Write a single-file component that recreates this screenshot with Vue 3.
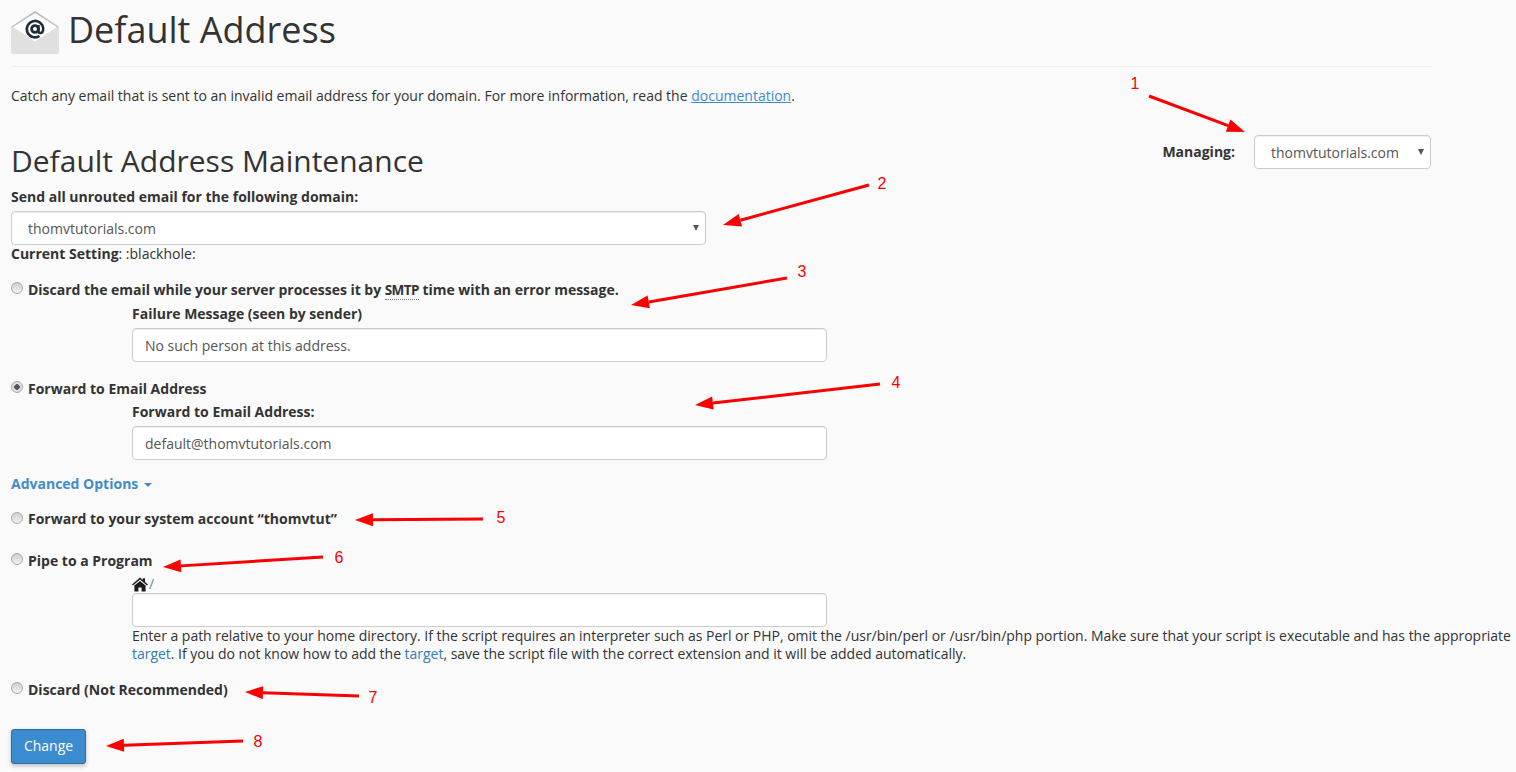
<script setup>
const arrows = [
  { x1: 1149, y1: 96, x2: 1245, y2: 132, n: '1', nx: 1135, ny: 89 },
  { x1: 869, y1: 185, x2: 723, y2: 225, n: '2', nx: 882, ny: 189 },
  { x1: 787, y1: 278, x2: 631, y2: 305, n: '3', nx: 802, ny: 277 },
  { x1: 880, y1: 384, x2: 695, y2: 405, n: '4', nx: 896, ny: 388 },
  { x1: 483, y1: 519, x2: 355, y2: 520, n: '5', nx: 501, ny: 523 },
  { x1: 323, y1: 557, x2: 163, y2: 567, n: '6', nx: 339, ny: 563 },
  { x1: 359, y1: 696, x2: 245, y2: 692, n: '7', nx: 373, ny: 703 },
  { x1: 243, y1: 741, x2: 106, y2: 746, n: '8', nx: 258, ny: 747 }
].map((a) => {
  const dx = a.x2 - a.x1
  const dy = a.y2 - a.y1
  const len = Math.hypot(dx, dy)
  const ux = dx / len
  const uy = dy / len
  const bx = a.x2 - ux * 18
  const by = a.y2 - uy * 18
  const head = [
    [a.x2, a.y2],
    [bx - uy * 6.5, by + ux * 6.5],
    [bx + uy * 6.5, by - ux * 6.5]
  ].map((p) => p.join(',')).join(' ')
  return { ...a, bx, by, head }
})
</script>

<template>
  <div class="page">
    <header class="head">
      <svg class="envelope" width="48" height="43" viewBox="0 0 48 43">
        <path d="M0 16 L24 0 L48 16 L48 41 Q48 43 46 43 L2 43 Q0 43 0 41 Z" fill="#e0e0e0" />
        <path d="M0 16 L24 0 L48 16 L24 20 Z" fill="#bbbbbb" />
        <path d="M2 16 L24 2 L46 16 L24 30.5 Z" fill="#ffffff" />
        <circle cx="24" cy="18" r="3.4" fill="none" stroke="#1f2d3d" stroke-width="2.8" />
        <path d="M27.4 14 V20 Q27.4 22 29.4 22 Q32.2 22 32.2 17.5 A8.2 8.2 0 1 0 28.5 25" fill="none" stroke="#1f2d3d" stroke-width="2.6" />
      </svg>
      <h1>Default Address</h1>
    </header>
    <p class="intro">Catch any email that is sent to an invalid email address for your domain. For more information, read the <a href="#">documentation</a>.</p>

    <div class="managing">
      <label>Managing:</label>
      <div class="select-wrap small">
        <select><option>thomvtutorials.com</option></select>
      </div>
    </div>

    <h2>Default Address Maintenance</h2>

    <label class="strong block">Send all unrouted email for the following domain:</label>
    <div class="select-wrap wide">
      <select><option>thomvtutorials.com</option></select>
    </div>
    <div class="current"><b>Current Setting</b>: :blackhole:</div>

    <div class="opt opt-discard-smtp">
      <span class="radio"></span>
      <span class="strong snug">Discard the email while your server processes it by <abbr>SMTP</abbr> time with an error message.</span>
    </div>
    <div class="sub">
      <label class="strong block sub-label first">Failure Message (seen by sender)</label>
      <div class="field">No such person at this address.</div>
    </div>

    <div class="opt opt-forward">
      <span class="radio on"></span>
      <span class="strong">Forward to Email Address</span>
    </div>
    <div class="sub">
      <label class="strong block sub-label">Forward to Email Address:</label>
      <div class="field">default@thomvtutorials.com</div>
    </div>

    <a class="advanced" href="#">Advanced Options<span class="caret"></span></a>

    <div class="opt opt-system">
      <span class="radio lower"></span>
      <span class="strong">Forward to your system account “thomvtut”</span>
    </div>
    <div class="opt opt-pipe">
      <span class="radio"></span>
      <span class="strong">Pipe to a Program</span>
    </div>
    <div class="sub">
      <div class="home-line">
        <svg width="16" height="15" viewBox="0 0 16 15"><path d="M8 0.6 L10.8 3 V1.2 H13 V4.9 L16 7.5 L15 8.6 L8 2.6 L1 8.6 L0 7.5 Z M2.4 8.6 L8 3.9 L13.6 8.6 V14.6 H9.6 V10.4 H6.4 V14.6 H2.4 Z" fill="#1c1c1c" /></svg><span class="slash">/</span>
      </div>
      <div class="field"></div>
      <div class="help">Enter a path relative to your home directory. If the script requires an interpreter such as Perl or PHP, omit the /usr/bin/perl or /usr/bin/php portion. Make sure that your script is executable and has the appropriate <a href="#">target</a>. If you do not know how to add the <a href="#">target</a>, save the script file with the correct extension and it will be added automatically.</div>
    </div>

    <div class="opt opt-last">
      <span class="radio"></span>
      <span class="strong">Discard (Not Recommended)</span>
    </div>

    <button class="btn" type="button">Change</button>

    <svg class="notes" width="1516" height="772" viewBox="0 0 1516 772">
      <g v-for="a in arrows" :key="a.n">
        <line :x1="a.x1" :y1="a.y1" :x2="a.bx" :y2="a.by" stroke="#fa0000" stroke-width="3" />
        <polygon :points="a.head" fill="#fa0000" />
        <text :x="a.nx" :y="a.ny" text-anchor="middle" class="note-num">{{ a.n }}</text>
      </g>
    </svg>
  </div>
</template>

<style scoped>
.page {
  position: relative;
  box-sizing: border-box;
  width: 1516px;
  height: 772px;
  overflow: hidden;
  padding: 0 6px 0 11px;
  background: #fafafa;
  color: #333;
  font: 14px/20px "Open Sans", sans-serif;
}
.head {
  display: flex;
  align-items: flex-start;
  width: 1421px;
  height: 66px;
  box-sizing: content-box;
  border-bottom: 1px solid #eee;
}
.envelope { margin-top: 11px; flex: none; }
h1 {
  margin: 5px 0 0 9px;
  font-size: 36px;
  line-height: 50px;
  font-weight: 400;
  color: #333;
}
.intro { margin: 19px 0 0; }
a { color: #337ab7; }
.intro a { text-decoration: underline; color: #428bca; }
.help a { text-decoration: none; }
.managing {
  float: right;
  display: flex;
  align-items: center;
  margin: 29px 79px 0 0;
  font-weight: 700;
}
.managing label { margin-right: 19px; }
.select-wrap { position: relative; }
.select-wrap::after {
  content: "";
  position: absolute;
  right: 7px;
  top: 14px;
  border-left: 3.5px solid transparent;
  border-right: 3.5px solid transparent;
  border-top: 6px solid #555;
  pointer-events: none;
}
select {
  display: block;
  box-sizing: border-box;
  width: 100%;
  height: 34px;
  padding: 2px 16px 0;
  appearance: none;
  background: #fff;
  border: 1px solid #ccc;
  border-radius: 4px;
  color: #555;
  font: 14px/20px "Open Sans", sans-serif;
  box-shadow: inset 0 1px 1px rgba(0, 0, 0, 0.075);
}
.small { width: 177px; }
.wide { width: 695px; margin-top: 4px; }
h2 {
  margin: 35px 0 0;
  font-size: 30px;
  line-height: 40px;
  font-weight: 400;
  color: #333;
}
.strong { font-weight: 700; }
.snug { letter-spacing: -0.02px; }
.block { display: block; }
h2 + .strong { margin-top: 6px; }
.current { margin-top: -1px; }
.opt {
  display: flex;
  align-items: flex-start;
  gap: 5px;
}
.radio {
  flex: none;
  box-sizing: border-box;
  width: 12px;
  height: 12px;
  margin-top: 2px;
  border: 1px solid #a9a9a9;
  border-radius: 50%;
  background: linear-gradient(#cfcfcf, #f2f2f2);
}
.radio.lower { margin-top: 3px; }
.radio.on {
  background: radial-gradient(circle, #555 0 2.5px, #dedede 3px);
}
abbr {
  font-size: 13.5px;
  letter-spacing: -0.6px;
  border-bottom: 1px dotted #777;
  cursor: help;
}
.opt-discard-smtp { margin-top: 16px; }
.opt-forward { margin-top: 17px; }
.opt-system { margin-top: 15px; }
.opt-pipe { margin-top: 22px; }
.opt-last { margin-top: 17px; }
.sub { margin: 0 0 0 121px; }
.sub-label { margin-top: 3px; margin-bottom: 4px; }
.sub-label.first { margin-top: 4px; }
.field {
  box-sizing: border-box;
  width: 695px;
  height: 34px;
  padding: 7px 12px 5px;
  background: #fff;
  border: 1px solid #ccc;
  border-radius: 4px;
  color: #555;
  box-shadow: inset 0 1px 1px rgba(0, 0, 0, 0.075);
}
.advanced {
  display: inline-block;
  margin-top: 14px;
  font-weight: 700;
  color: #428bca;
  text-decoration: none;
}
.caret {
  display: inline-block;
  margin-left: 6px;
  vertical-align: middle;
  border-left: 4px solid transparent;
  border-right: 4px solid transparent;
  border-top: 4px solid #428bca;
}
.home-line {
  display: flex;
  align-items: center;
  height: 18px;
  margin-top: 4px;
  margin-bottom: 0;
}
.home-line svg { flex: none; }
.slash { margin-left: 1px; color: #5a86b0; line-height: 18px; }
.help {
  width: 1400px;
  line-height: 18px;
  letter-spacing: -0.02px;
  color: #333;
}
.btn {
  display: block;
  box-sizing: border-box;
  width: 75px;
  height: 35px;
  margin-top: 29px;
  padding: 0 0 2px;
  background: #3a8bd0;
  border: 1px solid #2e6da4;
  border-radius: 3px;
  color: #fff;
  font: 14px/20px "Open Sans", sans-serif;
  box-shadow: 0 2px 4px rgba(0, 0, 0, 0.25);
}
.notes {
  position: absolute;
  left: 0;
  top: 0;
  pointer-events: none;
}
.note-num {
  font: 16px "Liberation Sans", sans-serif;
  fill: #fa0000;
}
</style>
